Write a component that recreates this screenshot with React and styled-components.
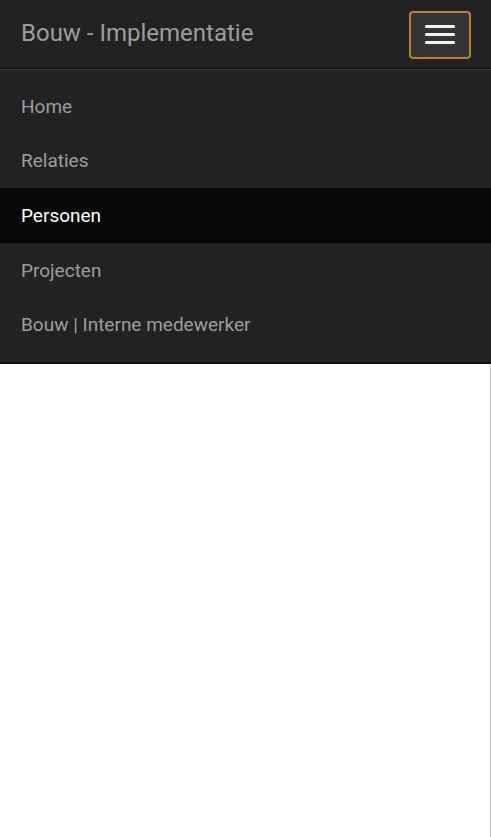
import React from "react";
import styled, { createGlobalStyle } from "styled-components";

const GlobalStyle = createGlobalStyle`
  html, body {
    margin: 0;
    padding: 0;
    background: #ffffff;
    font-family: Roboto, "Liberation Sans", sans-serif;
  }
`;

const Page = styled.div`
  width: 491px;
  height: 837px;
  display: flex;
  flex-direction: column;
`;

const NavBar = styled.header`
  background-color: #222222;
  height: 68px;
  display: flex;
  align-items: center;
  justify-content: space-between;
  padding: 0 20px 0 21px;
  border-bottom: 1px solid #101010;
`;

const Brand = styled.div`
  color: #9d9d9d;
  font-size: 24px;
  margin-bottom: 3px;
`;

const Toggle = styled.button`
  width: 62px;
  height: 48px;
  margin-top: 1px;
  background-color: #333333;
  border: 2px solid #b5832b;
  border-radius: 4px;
  display: flex;
  flex-direction: column;
  align-items: center;
  justify-content: center;
  gap: 5px;
  padding: 0;
`;

const Bar = styled.span`
  display: block;
  width: 30px;
  height: 3px;
  border-radius: 1px;
  background-color: #f2f2f2;
`;

const Menu = styled.nav`
  background-color: #222222;
  border-top: 1px solid #3a3a3a;
  border-bottom: 2px solid #101010;
  padding: 9px 0 10px;
  display: flex;
  flex-direction: column;
`;

const MenuItem = styled.a`
  display: flex;
  align-items: center;
  height: 54.6px;
  padding-left: 21px;
  font-size: 19px;
  color: ${(p) => (p.$active ? "#ffffff" : "#9d9d9d")};
  background-color: ${(p) => (p.$active ? "#080808" : "transparent")};
  text-decoration: none;
`;

const Body = styled.main`
  flex: 1;
  border-right: 1px solid #c4c4c4;
`;

const items = ["Home", "Relaties", "Personen", "Projecten", "Bouw | Interne medewerker"];

const App = () => {
  return (
    <Page>
      <GlobalStyle />
      <NavBar>
        <Brand>Bouw - Implementatie</Brand>
        <Toggle>
          <Bar />
          <Bar />
          <Bar />
        </Toggle>
      </NavBar>
      <Menu>
        {items.map((item) => (
          <MenuItem key={item} $active={item === "Personen"}>
            {item}
          </MenuItem>
        ))}
      </Menu>
      <Body />
    </Page>
  );
};

export default App;
